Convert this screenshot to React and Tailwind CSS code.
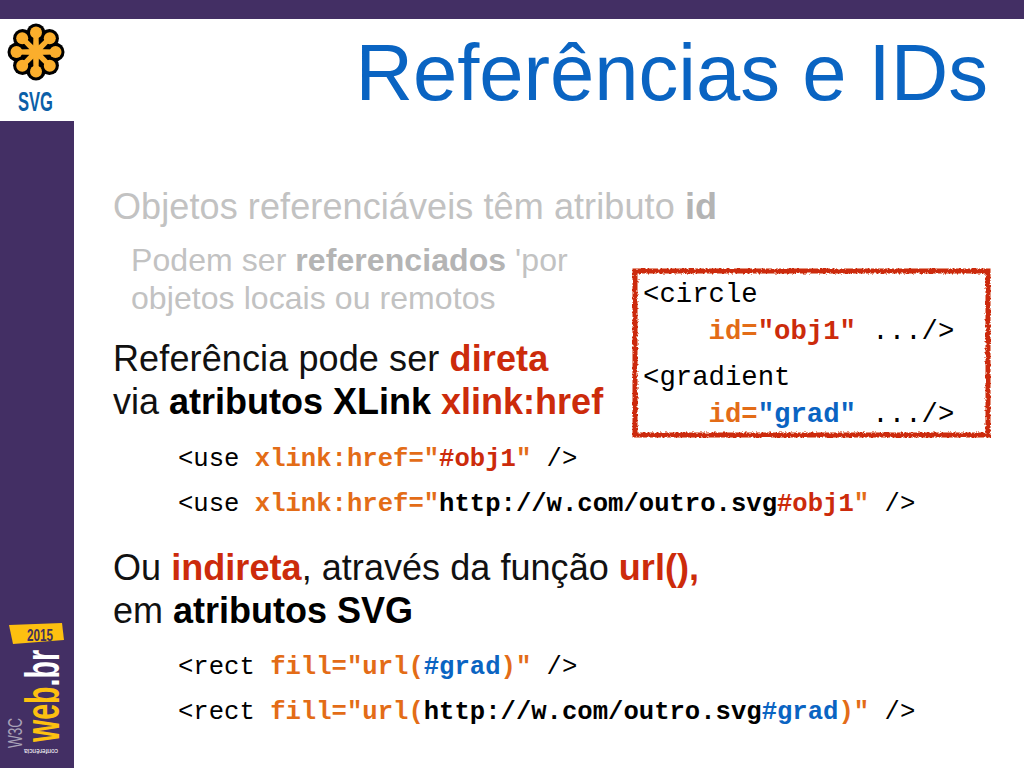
const sans = "font-['Liberation_Sans',sans-serif]";

function CodeLine({ children }) {
  return <p className="h-[45px] pl-[65px] font-['Liberation_Mono',monospace] text-[25.6px] leading-[45px] whitespace-pre text-black">{children}</p>;
}

const Or = ({ children }) => <b className="text-[#e36c17]">{children}</b>;
const Red = ({ children }) => <b className="text-[#cc2b0b]">{children}</b>;
const Blue = ({ children }) => <b className="text-[#0a64c2]">{children}</b>;
const Blk = ({ children }) => <b>{children}</b>;

function SvgLogo() {
  const angles = [0, 45, 90, 135, 180, 225, 270, 315];
  return (
    <svg width="74" height="102" viewBox="0 0 74 102">
      <g transform="translate(36 33)">
        {angles.map((a) => (
          <g key={a} transform={`rotate(${a})`}>
            <circle cx="0" cy="-19" r="9.5" fill="#000" />
            <rect x="-9" y="-19" width="18" height="19" fill="#000" />
          </g>
        ))}
        {angles.map((a) => (
          <g key={a} transform={`rotate(${a})`}>
            <circle cx="0" cy="-19.5" r="6" fill="#fbae2c" />
            <path d="M-2.5 -19 L2.5 -19 L3 0 L-3 0 Z" fill="#fbae2c" />
          </g>
        ))}
        <circle r="7" fill="#fbae2c" />
      </g>
      <text x="18" y="92" textLength="35" lengthAdjust="spacingAndGlyphs" fontFamily="Liberation Sans" fontWeight="700" fontSize="27" fill="#0b5fa8">SVG</text>
    </svg>
  );
}

function WebBrLogo() {
  return (
    <svg width="74" height="158" viewBox="0 0 74 158">
      <path d="M9 15 L62 13 L64 30 L13 34 Z" fill="#fdc010" />
      <text x="27" y="31" textLength="26" lengthAdjust="spacingAndGlyphs" fontFamily="Liberation Sans" fontWeight="700" fontSize="17" fill="#40305f">2015</text>
      <g transform="translate(59 132) rotate(-90)">
        <text x="0" y="0" textLength="92" lengthAdjust="spacingAndGlyphs" fontFamily="Liberation Sans" fontWeight="700" fontSize="48">
          <tspan fill="#fdc010">web</tspan><tspan fill="#fff">.br</tspan>
        </text>
      </g>
      <g transform="translate(22 138) rotate(-90)">
        <text x="0" y="0" textLength="30" lengthAdjust="spacingAndGlyphs" fontFamily="Liberation Sans" fontSize="20" fill="#a9a2b8">W3C</text>
      </g>
      <g transform="translate(58 139) rotate(180)">
        <text x="0" y="0" textLength="34" lengthAdjust="spacingAndGlyphs" fontFamily="Liberation Sans" fontSize="8" fill="#fff">conferência</text>
      </g>
    </svg>
  );
}

function CodeBox() {
  return (
    <div className="relative mt-[27px] h-[170px] w-[359px] pl-[11px] pt-[8px] font-['Liberation_Mono',monospace] text-[27.3px] text-black whitespace-pre">
      <svg className="absolute inset-0" width="359" height="170">
        <defs>
          <filter id="rough" x="-5%" y="-5%" width="110%" height="110%">
            <feTurbulence type="fractalNoise" baseFrequency="0.45" numOctaves="2" seed="3" />
            <feDisplacementMap in="SourceGraphic" scale="4" />
          </filter>
        </defs>
        <rect x="3" y="3" width="353" height="164" fill="none" stroke="#cc2b0b" strokeWidth="5" filter="url(#rough)" />
      </svg>
      <p className="h-[37px] leading-[37px]">{"<circle"}</p>
      <p className="h-[46px] leading-[37px]">{"    "}<Or>id=</Or><Red>"obj1"</Red>{" .../>"}</p>
      <p className="h-[37px] leading-[37px]">{"<gradient"}</p>
      <p className="h-[36px] leading-[37px]">{"    "}<Or>id=</Or><Blue>"grad"</Blue>{" .../>"}</p>
    </div>
  );
}

export default function App() {
  return (
    <div className={`flex h-[768px] w-[1024px] flex-col overflow-hidden bg-white ${sans}`}>
      <div className="h-[19px] bg-[#432f64]" />
      <div className="flex flex-1">
        <aside className="flex w-[74px] flex-col justify-between bg-[#432f64]">
          <div className="h-[102px] bg-white"><SvgLogo /></div>
          <WebBrLogo />
        </aside>
        <main className="flex-1 pl-[39px]">
          <h1 className="h-[110px] pr-[36px] text-right text-[79.6px] leading-[108px] text-[#0a64c2]">Referências e IDs</h1>
          <p className="mt-[57px] text-[36px] leading-[42px] tracking-[0.1px] text-[#c2c2c2]">Objetos referenciáveis têm atributo <b className="text-[#b4b4b4]">id</b></p>
          <div className="mt-[13px] flex">
            <div className="w-[519px]">
              <div className="pl-[18px] text-[32px] leading-[38px] tracking-[0.07px] text-[#c2c2c2]">
                <p>Podem ser <b className="text-[#b4b4b4]">referenciados</b> 'por</p>
                <p>objetos locais ou remotos</p>
              </div>
              <div className="mt-[20px] text-[36px] leading-[43px] text-[#111]">
                <p className="tracking-[0.12px]">Referência pode ser <Red>direta</Red></p>
                <p>via <b className="text-black">atributos XLink</b> <Red>xlink:href</Red></p>
              </div>
            </div>
            <CodeBox />
          </div>
          <div className="mt-[-1px]">
            <CodeLine>{"<use "}<Or>xlink:href="</Or><Red>#obj1</Red><Or>"</Or>{" />"}</CodeLine>
            <CodeLine>{"<use "}<Or>xlink:href="</Or><Blk>http://w.com/outro.svg</Blk><Red>#obj1</Red><Or>"</Or>{" />"}</CodeLine>
          </div>
          <div className="mt-[19px] text-[36px] leading-[43px] text-[#111]">
            <p className="tracking-[0.05px]">Ou <Red>indireta</Red>, através da função <Red>url(),</Red></p>
            <p>em <b className="text-black">atributos SVG</b></p>
          </div>
          <div className="mt-[13px]">
            <CodeLine>{"<rect "}<Or>fill="url(</Or><Blue>#grad</Blue><Or>)"</Or>{" />"}</CodeLine>
            <CodeLine>{"<rect "}<Or>fill="url(</Or><Blk>http://w.com/outro.svg</Blk><Blue>#grad</Blue><Or>)"</Or>{" />"}</CodeLine>
          </div>
        </main>
      </div>
    </div>
  );
}
